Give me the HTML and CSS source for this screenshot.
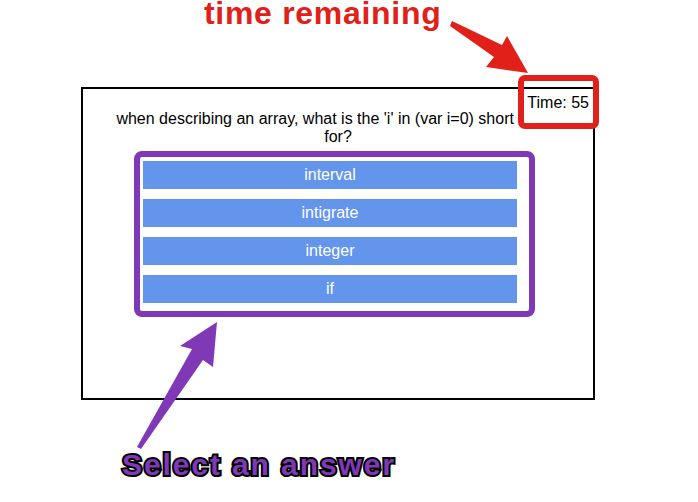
FILE: index.html
```html
<!DOCTYPE html>
<html lang="en">
<head>
<meta charset="utf-8">
<title>Quiz</title>
<link rel="stylesheet" href="styles.css">
</head>
<body>
<div class="page">
  <div class="quiz">
    <div class="timer">Time: 55</div>
    <div class="question">when describing an array, what is the 'i' in (var i=0) short for?</div>
    <div class="answers">
      <button class="answer">interval</button>
      <button class="answer">intigrate</button>
      <button class="answer">integer</button>
      <button class="answer">if</button>
    </div>
  </div>

  <div class="note note-time">time remaining</div>
  <div class="note note-select">Select an answer</div>
  <div class="hl hl-time"></div>
  <div class="hl hl-answers"></div>
  <svg class="arrows" width="698" height="502" viewBox="0 0 698 502" aria-hidden="true">
    <polygon class="arrow-red" points="452,21 502,45 507,36 528,73 486,67 494,57 450,26"/>
    <polygon class="arrow-purple" points="217,322 213,367 203,360 141,449 137,447 192,349 180,346"/>
  </svg>
</div>
</body>
</html>
```

FILE: styles.css
```css
html, body {
  margin: 0;
  padding: 0;
  background: #fff;
}

.page {
  position: relative;
  width: 698px;
  height: 502px;
  overflow: hidden;
  font-family: "Liberation Sans", Arial, sans-serif;
  color: #000;
}

.quiz {
  margin: 87px 0 0 81px;
  width: 510px;
  height: 309px;
  border: 2px solid #000;
}

.timer {
  float: right;
  padding: 5px 4px 12px 2px;
  font-size: 16px;
}

.question {
  margin: 0 22px;
  padding-top: 21px;
  text-align: center;
  font-size: 16px;
}

.answers {
  display: flex;
  flex-direction: column;
  gap: 10px;
  width: 374px;
  margin: 15px 0 0 60px;
}

.answer {
  display: block;
  height: 28px;
  padding: 0;
  border: 0;
  background: #6495ed;
  color: #fff;
  font-family: "Liberation Sans", Arial, sans-serif;
  font-size: 16px;
  text-align: center;
}

.note {
  position: absolute;
  font-weight: bold;
  white-space: nowrap;
}

.note-time {
  left: 204px;
  top: 0;
  font-size: 32px;
  line-height: 26px;
  letter-spacing: 0.7px;
  color: #e2201a;
}

.note-select {
  left: 122px;
  top: 450px;
  font-size: 30px;
  line-height: 1;
  letter-spacing: 1.9px;
  color: #7f38b6;
  -webkit-text-stroke: 4px #000;
  paint-order: stroke fill;
}

.hl {
  position: absolute;
  box-sizing: border-box;
}

.hl-time {
  left: 518px;
  top: 75px;
  width: 81px;
  height: 54px;
  border: 6px solid #e2201a;
  border-radius: 7px;
}

.hl-answers {
  left: 134px;
  top: 151px;
  width: 401px;
  height: 166px;
  border: 6px solid #7f38b6;
  border-radius: 8px;
}

.arrows {
  position: absolute;
  left: 0;
  top: 0;
}

.arrow-red {
  fill: #e2201a;
}

.arrow-purple {
  fill: #7f38b6;
}
```
